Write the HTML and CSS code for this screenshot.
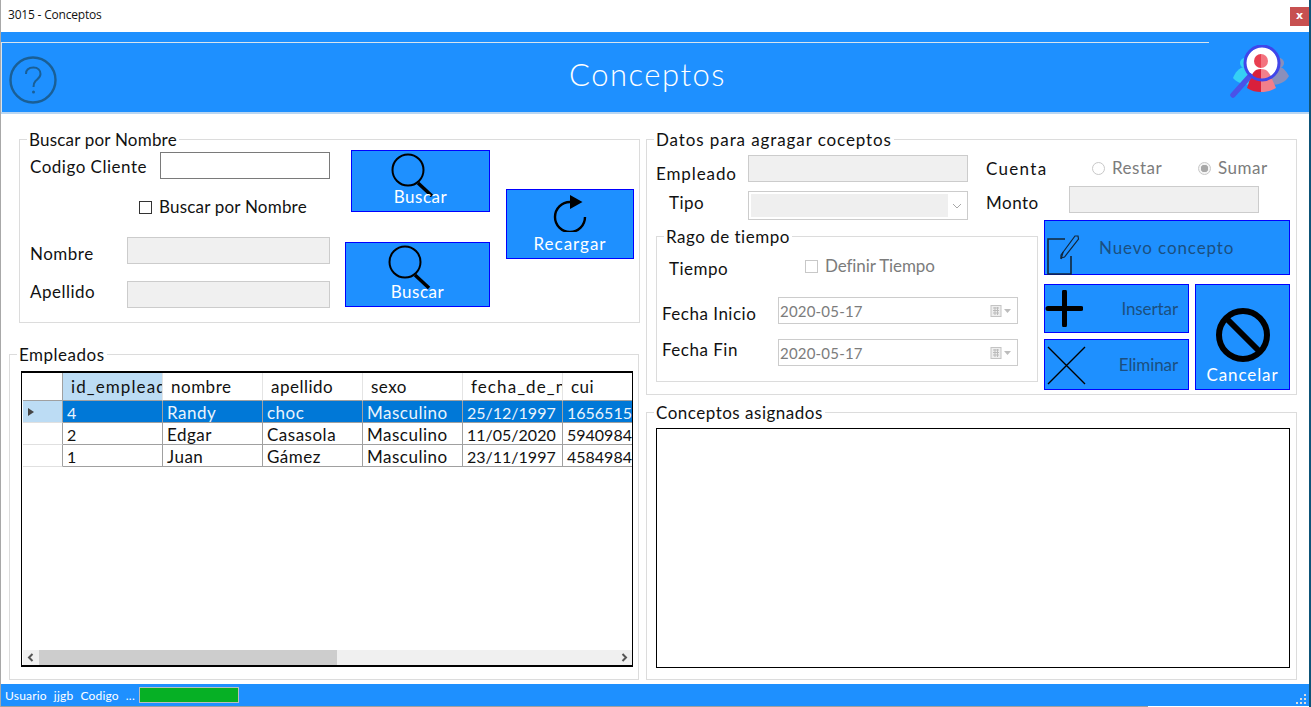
FILE: index.html
```html
<!DOCTYPE html>
<html>
  <head>
    <meta charset="utf-8" />
    <title>3015 - Conceptos</title>
    <link rel="stylesheet" href="styles.css">
  </head>
  <body>
    <div class="window">
      <div class="titlebar">
        <span class="titlebar-text">3015 - Conceptos</span>
        <span class="close">x</span>
      </div>

      <div class="banner">
        <div class="banner-line"></div>
        <div class="banner-row">
          <svg class="help" width="48" height="48" viewBox="0 0 48 48">
            <circle cx="24" cy="24" r="22.5" fill="none" stroke="#1a5f96" stroke-width="2.4"/>
            <path d="M17 18C17 13.5 20 11.500 24.500 11.500C29 11.500 31.500 14.500 31.500 18C31.500 21.500 28.500 23 26.500 25C25 26.500 24.500 28 24.500 31" fill="none" stroke="#1a5f96" stroke-width="2"/>
            <circle cx="24.500" cy="36" r="1.500" fill="#1a5f96"/>
          </svg>
          <h1 class="banner-title">Conceptos</h1>
          <svg class="logo" width="61" height="53" viewBox="0 0 61 53">
            <circle cx="16" cy="18" r="5" fill="#35d0f5"/>
            <path d="M16 22C10 22 6 28 4 33C8 38 16 40 24 40V24Z" fill="#35d0f5"/>
            <circle cx="50" cy="18" r="5" fill="#8a8fbb"/>
            <path d="M50 22C55 22 58 28 60 31C57 37 50 40 42 40V24Z" fill="#8a8fbb"/>
            <circle cx="33" cy="18" r="16" fill="#fff"/>
            <path d="M32 9a7 7 0 0 0 0 14Z" fill="#e83f50"/>
            <path d="M32 9a7 7 0 0 1 0 14Z" fill="#f3737f"/>
            <path d="M32 24C25 24 23 29 21 34L18 43C23 46 27 47 32 47Z" fill="#d9203c"/>
            <path d="M32 24C39 24 41 29 43 34L47 43C42 46 37 47 32 47Z" fill="#f27f8b"/>
            <path d="M21 31L4 50" stroke="#4a52e8" stroke-width="5.500" stroke-linecap="round"/>
            <circle cx="33" cy="18" r="17" fill="none" stroke="#3f46ea" stroke-width="3"/>
          </svg>
        </div>
      </div>

      <div class="main">
        <div class="col">
          <fieldset class="group group-buscar">
            <legend class="legend-buscar">Buscar por Nombre</legend>
            <div class="buscar-row">
              <div class="buscar-fields">
                <div class="field field-codigo">
                  <label class="lbl lbl-codigo">Codigo Cliente</label>
                  <input class="txt txt-codigo" type="text">
                </div>
                <div class="check-line check-nombre">
                  <input class="check" type="checkbox">
                  <span>Buscar por Nombre</span>
                </div>
                <div class="field field-nombre">
                  <label class="lbl lbl-nombre">Nombre</label>
                  <input class="txt txt-off txt-persona" type="text" disabled>
                </div>
                <div class="field field-apellido">
                  <label class="lbl lbl-apellido">Apellido</label>
                  <input class="txt txt-off txt-persona" type="text" disabled>
                </div>
              </div>
              <div class="buscar-btns">
                <button class="btn btn-buscar1">
                  <svg class="ico-lupa" width="44" height="44" viewBox="0 0 44 44">
                    <circle cx="17" cy="17" r="15.500" fill="none" stroke="#000" stroke-width="2"/>
                    <path d="M27 30L41 43" stroke="#000" stroke-width="3.500"/>
                  </svg>
                  <span class="btn-under">Buscar</span>
                </button>
                <button class="btn btn-buscar2">
                  <svg class="ico-lupa" width="44" height="44" viewBox="0 0 44 44">
                    <circle cx="17" cy="17" r="15.500" fill="none" stroke="#000" stroke-width="2"/>
                    <path d="M27 30L41 43" stroke="#000" stroke-width="3.500"/>
                  </svg>
                  <span class="btn-under">Buscar</span>
                </button>
              </div>
              <button class="btn btn-recargar">
                <svg width="36" height="38" viewBox="0 0 36 38">
                  <path d="M18 8A15 15 0 1 0 33 23" fill="none" stroke="#000" stroke-width="2.400"/>
                  <path d="M18 1L30.500 8L18 15Z" fill="#000"/>
                </svg>
                <span class="btn-recargar-text">Recargar</span>
              </button>
            </div>
          </fieldset>

          <fieldset class="group group-empleados">
            <legend>Empleados</legend>
            <div class="grid-box">
              <div class="grid-body">
                <table class="grid">
                  <colgroup>
                    <col class="col-head">
                    <col class="col-cell"><col class="col-cell"><col class="col-cell">
                    <col class="col-cell"><col class="col-cell"><col class="col-cell">
                  </colgroup>
                  <thead>
                    <tr>
                      <th class="rowhead"></th>
                      <th class="th-sel th-long">id_empleado</th>
                      <th>nombre</th>
                      <th>apellido</th>
                      <th>sexo</th>
                      <th class="th-long">fecha_de_nacimiento</th>
                      <th>cui</th>
                    </tr>
                  </thead>
                  <tbody>
                    <tr class="row-sel">
                      <td class="rowhead"><span class="row-arrow"></span></td>
                      <td class="num">4</td><td>Randy</td><td>choc</td><td>Masculino</td><td class="num">25/12/1997</td><td class="num">16565156</td>
                    </tr>
                    <tr>
                      <td class="rowhead"></td>
                      <td class="num">2</td><td>Edgar</td><td>Casasola</td><td>Masculino</td><td class="num">11/05/2020</td><td class="num">59409849</td>
                    </tr>
                    <tr>
                      <td class="rowhead"></td>
                      <td class="num">1</td><td>Juan</td><td>Gámez</td><td>Masculino</td><td class="num">23/11/1997</td><td class="num">45849849</td>
                    </tr>
                  </tbody>
                </table>
              </div>
              <div class="hscroll">
                <svg width="16" height="15" viewBox="0 0 16 15"><path d="M9.500 4L6 7.500L9.500 11" fill="none" stroke="#555" stroke-width="2"/></svg>
                <div class="hscroll-track"><div class="hscroll-thumb"></div></div>
                <svg width="16" height="15" viewBox="0 0 16 15"><path d="M6.500 4L10 7.500L6.500 11" fill="none" stroke="#555" stroke-width="2"/></svg>
              </div>
            </div>
          </fieldset>
        </div>

        <div class="col col-right">
          <fieldset class="group group-datos">
            <legend class="legend-datos">Datos para agragar coceptos</legend>
            <div class="datos-top">
              <div class="datos-left">
                <div class="field field-empleado">
                  <label class="lbl lbl-empleado">Empleado</label>
                  <input class="txt txt-off txt-datos" type="text" disabled>
                </div>
                <div class="field field-tipo">
                  <label class="lbl lbl-tipo">Tipo</label>
                  <div class="combo">
                    <div class="combo-fill"></div>
                    <svg width="12" height="10" viewBox="0 0 12 10"><path d="M2 3L6 7L10 3" fill="none" stroke="#a8a8a8" stroke-width="1"/></svg>
                  </div>
                </div>
              </div>
              <div class="datos-right">
                <div class="field field-cuenta">
                  <label class="lbl lbl-cuenta">Cuenta</label>
                  <div class="radio-line radio-restar">
                    <input class="radio" type="radio" name="cuenta" disabled>
                    <span>Restar</span>
                  </div>
                  <div class="radio-line radio-sumar">
                    <input class="radio" type="radio" name="cuenta" checked disabled>
                    <span>Sumar</span>
                  </div>
                </div>
                <div class="field field-monto">
                  <label class="lbl lbl-monto">Monto</label>
                  <input class="txt txt-off txt-monto" type="text" disabled>
                </div>
              </div>
            </div>
            <div class="datos-bottom">
              <fieldset class="group group-rango">
                <legend>Rago de tiempo</legend>
                <div class="field field-tiempo">
                  <label class="lbl lbl-tiempo">Tiempo</label>
                  <div class="check-line check-off">
                    <input class="check check-dis" type="checkbox" disabled>
                    <span>Definir Tiempo</span>
                  </div>
                </div>
                <div class="field field-inicio">
                  <label class="lbl lbl-inicio">Fecha Inicio</label>
                  <div class="date">
                    <span class="date-text">2020-05-17</span>
                    <svg width="22" height="12" viewBox="0 0 22 12">
                      <rect x="1" y="0.500" width="10" height="11" fill="#eee" stroke="#c4c4c4"/>
                      <path d="M3 3H9M3 5.500H9M3 8H9M5 2V10M7.500 2V10" stroke="#bbb" stroke-width="1"/>
                      <path d="M14 4H21L17.500 8Z" fill="#bdbdbd"/>
                    </svg>
                  </div>
                </div>
                <div class="field field-fin">
                  <label class="lbl lbl-fin">Fecha Fin</label>
                  <div class="date">
                    <span class="date-text">2020-05-17</span>
                    <svg width="22" height="12" viewBox="0 0 22 12">
                      <rect x="1" y="0.500" width="10" height="11" fill="#eee" stroke="#c4c4c4"/>
                      <path d="M3 3H9M3 5.500H9M3 8H9M5 2V10M7.500 2V10" stroke="#bbb" stroke-width="1"/>
                      <path d="M14 4H21L17.500 8Z" fill="#bdbdbd"/>
                    </svg>
                  </div>
                </div>
              </fieldset>
              <div class="actions">
                <button class="btn btn-nuevo">
                  <svg width="36" height="45" viewBox="0 0 36 45">
                    <path d="M20 9H3V44H26V26" fill="none" stroke="#12263a" stroke-width="1.600"/>
                    <path d="M16 25L30 6L33 6L33.500 9L19.500 27L16 28Z" fill="none" stroke="#12263a" stroke-width="1.200"/>
                    <path d="M18 22L16 29" stroke="#12263a" stroke-width="1.400"/>
                  </svg>
                  <span class="btn-dim btn-nuevo-text">Nuevo concepto</span>
                </button>
                <div class="actions-low">
                  <div class="actions-stack">
                    <button class="btn btn-insertar">
                      <svg width="38" height="37" viewBox="0 0 38 37">
                        <path d="M3 18.500H36M19.500 2V35" stroke="#000" stroke-width="5" stroke-linecap="round"/>
                      </svg>
                      <span class="btn-dim">Insertar</span>
                    </button>
                    <button class="btn btn-eliminar">
                      <svg width="40" height="40" viewBox="0 0 40 40">
                        <path d="M2 2L39 39M39 2L2 39" stroke="#000" stroke-width="1.400"/>
                      </svg>
                      <span class="btn-dim">Eliminar</span>
                    </button>
                  </div>
                  <button class="btn btn-cancelar">
                    <svg width="60" height="60" viewBox="0 0 60 60">
                      <circle cx="30" cy="30" r="24" fill="none" stroke="#000" stroke-width="6"/>
                      <path d="M13 13L47 47" stroke="#000" stroke-width="6"/>
                    </svg>
                    <span class="btn-cancelar-text">Cancelar</span>
                  </button>
                </div>
              </div>
            </div>
          </fieldset>

          <fieldset class="group group-asignados">
            <legend>Conceptos asignados</legend>
            <div class="asignados-box"></div>
          </fieldset>
        </div>
      </div>

      <div class="status">
        <span>Usuario</span>
        <span>jjgb</span>
        <span>Codigo</span>
        <span>...</span>
        <div class="progress"></div>
        <svg class="grip" width="12" height="12" viewBox="0 0 12 12">
          <path d="M9 1h2v2H9zM5 5h2v2H5zM9 5h2v2H9zM1 9h2v2H1zM5 9h2v2H5zM9 9h2v2H9z" fill="#ddd"/>
        </svg>
      </div>
      <div class="bottom-edge"></div>
    </div>
  </body>
</html>
```

FILE: styles.css
```css
html,
body {
  margin: 0;
  height: 100%;
  overflow: hidden;
  background: #0d5378;
}

.window {
  box-sizing: border-box;
  width: 1309px;
  height: 707px;
  display: flex;
  flex-direction: column;
  background: white;
  border-left: 1px solid #a8a8a8;
  font-family: "Lato", "Open Sans", sans-serif;
  font-size: 17px;
  letter-spacing: 0.5px;
  color: #111;
}

/* title bar */
.titlebar {
  height: 32px;
  flex: none;
  display: flex;
  justify-content: space-between;
  align-items: flex-start;
  padding-left: 7px;
}
.titlebar-text {
  font-family: "Open Sans", sans-serif;
  font-size: 12px;
  letter-spacing: -0.2px;
  line-height: 30px;
}
.close {
  width: 19px;
  height: 19px;
  margin-top: 7px;
  background: #c75050;
  color: white;
  font-family: "DejaVu Sans", sans-serif;
  font-size: 11px;
  font-weight: bold;
  line-height: 17px;
  text-align: center;
  letter-spacing: 0;
}

/* blue header */
.banner {
  height: 82px;
  flex: none;
  box-sizing: border-box;
  background: #1e90ff;
  padding-top: 10px;
  border-bottom: 2px solid #b9d6f2;
}
.banner-line {
  width: 1208px;
  height: 1px;
  background: #d8e4ee;
}
.banner-row {
  display: grid;
  grid-template-columns: 1fr auto 1fr;
  align-items: center;
  height: 69px;
  padding: 0 23px 0 7px;
  border-left: 1px solid #d8e4ee;
}
.help {
  margin-top: 4px;
}
.banner-title {
  margin: 0 0 8px;
  color: white;
  font-size: 31px;
  font-weight: 300;
  letter-spacing: 1.5px;
}
.logo {
  justify-self: end;
  margin: 0 -4px 12px 0;
}

/* main area */
.main {
  flex: 1;
  display: grid;
  grid-template-columns: 630px 651px;
  column-gap: 7px;
  padding: 15px 0 0 8px;
  min-height: 0;
}
.col {
  display: flex;
  flex-direction: column;
  gap: 21px;
}
.col-right {
  gap: 7px;
}

.group {
  box-sizing: border-box;
  margin: 0;
  padding: 0;
  min-width: 0;
  border: 1px solid #dcdcdc;
}
.group legend {
  margin-left: 7px;
  padding: 1px 2px 0;
  line-height: 20px;
}
.group .legend-buscar {
  letter-spacing: 0.2px;
}
.group .legend-datos {
  letter-spacing: 0.9px;
}

.lbl {
  display: block;
  flex: none;
  align-self: flex-start;
  line-height: 20px;
}
.field {
  display: flex;
}

.txt {
  box-sizing: border-box;
  display: block;
  margin: 0;
  padding: 0;
  height: 27px;
  background: white;
  border: 1px solid #7a7a7a;
  outline: none;
}
.txt-off {
  background: #f0f0f0;
  border: 1px solid #cccccc;
}

.check {
  appearance: none;
  box-sizing: border-box;
  width: 13px;
  height: 13px;
  margin: 0;
  flex: none;
  background: white;
  border: 1px solid #333;
}
.check-dis {
  border-color: #c8c8c8;
}
.check-line,
.radio-line {
  display: flex;
  align-items: center;
  gap: 7px;
  line-height: 20px;
}
.radio {
  appearance: none;
  box-sizing: border-box;
  width: 13px;
  height: 13px;
  margin: 0;
  flex: none;
  border: 1px solid #c8c8c8;
  border-radius: 50%;
  background: white;
}
.radio:checked {
  background: radial-gradient(circle, #a8a8a8 0 3.5px, #f4f4f4 4px);
}

/* buttons */
.btn {
  box-sizing: border-box;
  display: flex;
  margin: 0;
  padding: 0;
  flex: none;
  background: #1e90ff;
  border: 1px solid #0000ff;
  color: white;
  font: inherit;
  letter-spacing: inherit;
}
.btn-dim {
  color: #1b4f80;
}

/* buscar por nombre */
.group-buscar {
  width: 621px;
  height: 194px;
  margin-left: 10px;
}
.buscar-row {
  display: flex;
  align-items: flex-start;
  padding-left: 10px;
}
.buscar-fields {
  width: 300px;
  flex: none;
}
.field-codigo {
  margin-top: 2px;
}
.lbl-codigo {
  width: 130px;
  margin-top: 5px;
}
.txt-codigo {
  width: 170px;
}
.check-nombre {
  margin: 18px 0 0 109px;
  letter-spacing: 0.2px;
}
.field-nombre {
  margin-top: 20px;
}
.field-apellido {
  margin-top: 17px;
}
.lbl-nombre,
.lbl-apellido {
  width: 97px;
}
.lbl-nombre {
  margin-top: 7px;
}
.lbl-apellido {
  margin-top: 1px;
}
.txt-persona {
  width: 203px;
}
.buscar-btns {
  width: 145px;
  margin-left: 15px;
  flex: none;
  display: flex;
  flex-direction: column;
  align-items: flex-end;
}
.btn-buscar1,
.btn-buscar2 {
  flex-direction: column;
  align-items: center;
  padding-top: 2px;
}
.btn-buscar1 {
  width: 139px;
  height: 62px;
}
.btn-buscar2 {
  width: 145px;
  height: 65px;
  margin-top: 30px;
}
.ico-lupa {
  margin-right: 16px;
}
.btn-under {
  margin-top: -10px;
  line-height: 20px;
}
.btn-buscar2 .btn-under {
  margin-top: -7px;
}
.btn-recargar {
  width: 128px;
  height: 70px;
  margin: 39px 0 0 16px;
  flex-direction: column;
  align-items: center;
  padding-top: 4px;
  letter-spacing: 1px;
}
.btn-recargar-text {
  margin-top: 2px;
  line-height: 20px;
}

/* empleados */
.group-empleados {
  height: 336px;
}
.grid-box {
  box-sizing: border-box;
  width: 612px;
  height: 296px;
  margin: 6px 0 0 11px;
  display: flex;
  flex-direction: column;
  border: 1px solid black;
  border-top-width: 2px;
  border-bottom-width: 2px;
}
.grid-body {
  flex: 1;
  overflow: hidden;
  padding-left: 1px;
}
.grid {
  table-layout: fixed;
  width: 640px;
  border-collapse: separate;
  border-spacing: 0;
}
.col-head {
  width: 40px;
}
.col-cell {
  width: 100px;
}
.grid th,
.grid td {
  box-sizing: border-box;
  padding: 0 0 0 4px;
  overflow: hidden;
  white-space: nowrap;
  font-weight: normal;
  text-align: left;
}
.grid th {
  height: 28px;
  padding-left: 8px;
  border-right: 1px solid #e4e4e4;
  border-bottom: 1px solid #a0a0a0;
}
.grid .th-long {
  letter-spacing: 1.1px;
}
.grid td {
  height: 22px;
  padding-top: 2px;
  line-height: 19px;
  border-right: 1px solid #a0a0a0;
  border-bottom: 1px solid #a0a0a0;
}
.grid .num {
  font-size: 16px;
  letter-spacing: 0;
}
.grid .th-sel {
  background: #bcdcf4;
}
.grid .rowhead {
  padding: 0;
  border-right-color: #a0a0a0;
}
.grid td.rowhead {
  border-bottom-color: #e0e0e0;
}
.row-sel td {
  background: #0078d7;
  color: #eaf4fc;
}
.row-sel td.rowhead {
  background: #bcdcf4;
}
.row-arrow {
  display: block;
  width: 0;
  height: 0;
  margin-left: 5px;
  border-left: 6px solid #444;
  border-top: 4px solid transparent;
  border-bottom: 4px solid transparent;
}
.hscroll {
  height: 15px;
  flex: none;
  display: flex;
  margin: 0 0 0 1px;
  background: #f0f0f0;
}
.hscroll-track {
  flex: 1;
}
.hscroll-thumb {
  width: 298px;
  height: 15px;
  background: #cdcdcd;
}

/* datos */
.group-datos {
  height: 266px;
}
.datos-top {
  display: flex;
  height: 70px;
  padding-left: 9px;
}
.datos-left {
  width: 312px;
  flex: none;
}
.field-empleado {
  margin-top: 5px;
}
.lbl-empleado {
  width: 92px;
  margin-top: 9px;
  letter-spacing: 0.9px;
}
.txt-datos {
  width: 220px;
}
.field-tipo {
  margin-top: 7px;
}
.lbl-tipo {
  width: 79px;
  margin: 2px 0 0 13px;
}
.combo {
  box-sizing: border-box;
  width: 220px;
  height: 29px;
  display: flex;
  align-items: center;
  padding: 2px;
  border: 1px solid #cccccc;
}
.combo-fill {
  width: 197px;
  height: 100%;
  margin-right: 3px;
  background: #efefef;
}
.datos-right {
  margin-left: 18px;
}
.field-cuenta {
  margin-top: 8px;
}
.lbl-cuenta {
  width: 106px;
  margin-top: 1px;
  letter-spacing: 1.3px;
}
.radio-line {
  color: #7c7c7c;
  margin-top: -1px;
}
.radio-restar {
  width: 106px;
}
.field-monto {
  margin-top: 7px;
}
.lbl-monto {
  width: 83px;
  margin-top: 7px;
}
.txt-monto {
  width: 190px;
}
.datos-bottom {
  display: flex;
  padding-left: 9px;
}
.group-rango {
  width: 382px;
  height: 156px;
  margin-top: 6px;
}
.field-tiempo {
  margin-top: 12px;
}
.lbl-tiempo {
  width: 136px;
  margin-left: 12px;
}
.check-off {
  color: #7c7c7c;
  margin-top: -6px;
  letter-spacing: -0.1px;
}
.field-inicio {
  margin-top: 18px;
}
.field-fin {
  margin-top: 15px;
}
.lbl-inicio,
.lbl-fin {
  width: 116px;
  margin-left: 5px;
}
.lbl-inicio {
  margin-top: 7px;
}
.lbl-fin {
  margin-top: 1px;
}
.date {
  box-sizing: border-box;
  width: 240px;
  height: 27px;
  display: flex;
  align-items: center;
  justify-content: space-between;
  padding: 0 5px 0 1px;
  border: 1px solid #cccccc;
  color: #7c7c7c;
  font-size: 15px;
  letter-spacing: 0.2px;
}
.actions {
  width: 246px;
  margin-left: 6px;
  flex: none;
}
.btn-nuevo {
  width: 246px;
  height: 55px;
  align-items: flex-start;
  padding-top: 9px;
  letter-spacing: 0.9px;
}
.btn-nuevo-text {
  margin: 8px 0 0 18px;
  line-height: 20px;
}
.actions-low {
  display: flex;
  gap: 6px;
  margin-top: 9px;
}
.actions-stack {
  display: flex;
  flex-direction: column;
  gap: 6px;
}
.btn-insertar,
.btn-eliminar {
  width: 145px;
  justify-content: space-between;
  padding-right: 10px;
  line-height: 20px;
  letter-spacing: -0.1px;
}
.btn-insertar {
  height: 49px;
  align-items: center;
  padding-left: 0;
}
.btn-eliminar {
  height: 51px;
  align-items: center;
  padding-left: 1px;
}
.btn-cancelar {
  width: 95px;
  height: 106px;
  flex-direction: column;
  align-items: center;
  padding-top: 20px;
  letter-spacing: 0.9px;
}
.btn-cancelar-text {
  line-height: 20px;
}

/* asignados */
.group-asignados {
  height: 278px;
}
.asignados-box {
  box-sizing: border-box;
  width: 634px;
  height: 240px;
  margin: 5px 0 0 9px;
  background: white;
  border: 1px solid black;
}

/* status bar */
.status {
  height: 22px;
  flex: none;
  display: flex;
  align-items: center;
  gap: 7px;
  padding-left: 4px;
  background: #1e90ff;
  color: white;
  font-size: 12px;
  letter-spacing: 0.2px;
}
.progress {
  box-sizing: border-box;
  width: 100px;
  height: 16px;
  margin-left: -3px;
  background: #06b025;
  border: 1px solid #bcbcbc;
}
.grip {
  margin: 8px 2px 0 auto;
}
.bottom-edge {
  width: 1147px;
  height: 1px;
  flex: none;
  background: #a0a0a0;
}
```
